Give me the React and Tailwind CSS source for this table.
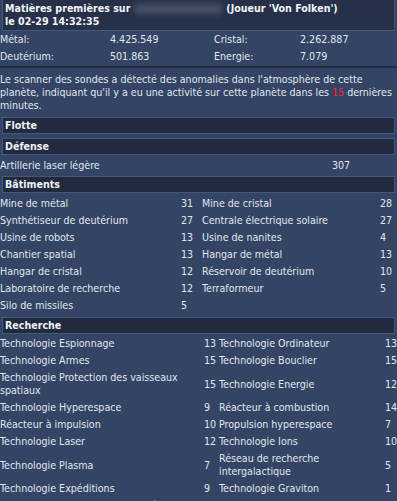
const buildings = [
  ["Mine de métal", "31", "Mine de cristal", "28"],
  ["Synthétiseur de deutérium", "27", "Centrale électrique solaire", "27"],
  ["Usine de robots", "13", "Usine de nanites", "4"],
  ["Chantier spatial", "13", "Hangar de métal", "13"],
  ["Hangar de cristal", "12", "Réservoir de deutérium", "10"],
  ["Laboratoire de recherche", "12", "Terraformeur", "5"],
  ["Silo de missiles", "5", "", ""],
];

const research = [
  ["Technologie Espionnage", "13", "Technologie Ordinateur", "13"],
  ["Technologie Armes", "15", "Technologie Bouclier", "15"],
  ["Technologie Protection des vaisseaux spatiaux", "15", "Technologie Energie", "12"],
  ["Technologie Hyperespace", "9", "Réacteur à combustion", "14"],
  ["Réacteur à impulsion", "10", "Propulsion hyperespace", "7"],
  ["Technologie Laser", "12", "Technologie Ions", "10"],
  ["Technologie Plasma", "7", "Réseau de recherche intergalactique", "5"],
  ["Technologie Expéditions", "9", "Technologie Graviton", "1"],
];

function Band({ children }) {
  return (
    <div className="mx-[2px] h-[17px] border border-[#46587a] bg-[#212a3e] pl-[2px] font-bold leading-[15px] text-[#eef1f6]">
      {children}
    </div>
  );
}

function Cell({ children }) {
  return <div className="flex items-center py-[2px]">{children}</div>;
}

// table cells sit 1px lower inside their 17px rows
function Td({ children }) {
  return <div className="flex items-center pb-[1px] pt-[3px]">{children}</div>;
}

export default function App() {
  return (
    <div className="min-h-[501px] w-[397px] overflow-hidden bg-[#344464] font-['DejaVu_Sans_Condensed','DejaVu_Sans',sans-serif] text-[10.6px] leading-[13px] text-[#e2e6ef]">
      {/* report title */}
      <div className="mx-[2px] h-[31px] border border-t-0 border-[#46587a] bg-[#263048] px-[2px] pt-[2px] font-bold text-[#f2f4f8]">
        <div className="flex items-center">
          <span>Matières premières sur</span>
          <span className="mx-[4px] h-[10px] w-[88px] rounded-sm bg-[#6c7488] opacity-50 blur-[3px]" />
          <span>(Joueur 'Von Folken')</span>
        </div>
        <div>le 02-29 14:32:35</div>
      </div>

      {/* resources */}
      <div className="grid grid-cols-[110px_104px_86px_1fr] border-b-2 border-[#222b3f] pb-[1px]">
        <Cell>Métal:</Cell>
        <Cell>4.425.549</Cell>
        <Cell>Cristal:</Cell>
        <Cell>2.262.887</Cell>
        <Cell>Deutérium:</Cell>
        <Cell>501.863</Cell>
        <Cell>Energie:</Cell>
        <Cell>7.079</Cell>
      </div>

      <p className="pb-[5px] pt-[5px]">
        Le scanner des sondes a détecté des anomalies dans l'atmosphère de cette planète, indiquant qu'il y a eu une activité sur cette planète dans les{" "}
        <span className="text-[#ff2020]">15</span> dernières minutes.
      </p>

      <Band>Flotte</Band>

      <div className="mt-[4px]">
        <Band>Défense</Band>
        <div className="mt-[1px] grid grid-cols-[332px_1fr]">
          <Td>Artillerie laser légère</Td>
          <Td>307</Td>
        </div>
      </div>

      <div className="mt-[3px]">
        <Band>Bâtiments</Band>
        <div className="mt-[1px] grid grid-cols-[181px_21px_178px_1fr]">
          {buildings.map((r, i) => (
            <div key={i} className="contents">
              <Td>{r[0]}</Td>
              <Td>{r[1]}</Td>
              <Td>{r[2]}</Td>
              <Td>{r[3]}</Td>
            </div>
          ))}
        </div>
      </div>

      <div className="mt-[4px]">
        <Band>Recherche</Band>
        <div className="grid grid-cols-[204px_15px_166px_1fr]">
          {research.map((r, i) => (
            <div key={i} className="contents">
              <Td>{r[0]}</Td>
              <Td>{r[1]}</Td>
              <Td>{r[2]}</Td>
              <Td>{r[3]}</Td>
            </div>
          ))}
        </div>
      </div>

      <div className="pt-[3px] text-center">Probabilité de contre-espionnage : 0 %</div>
    </div>
  );
}
